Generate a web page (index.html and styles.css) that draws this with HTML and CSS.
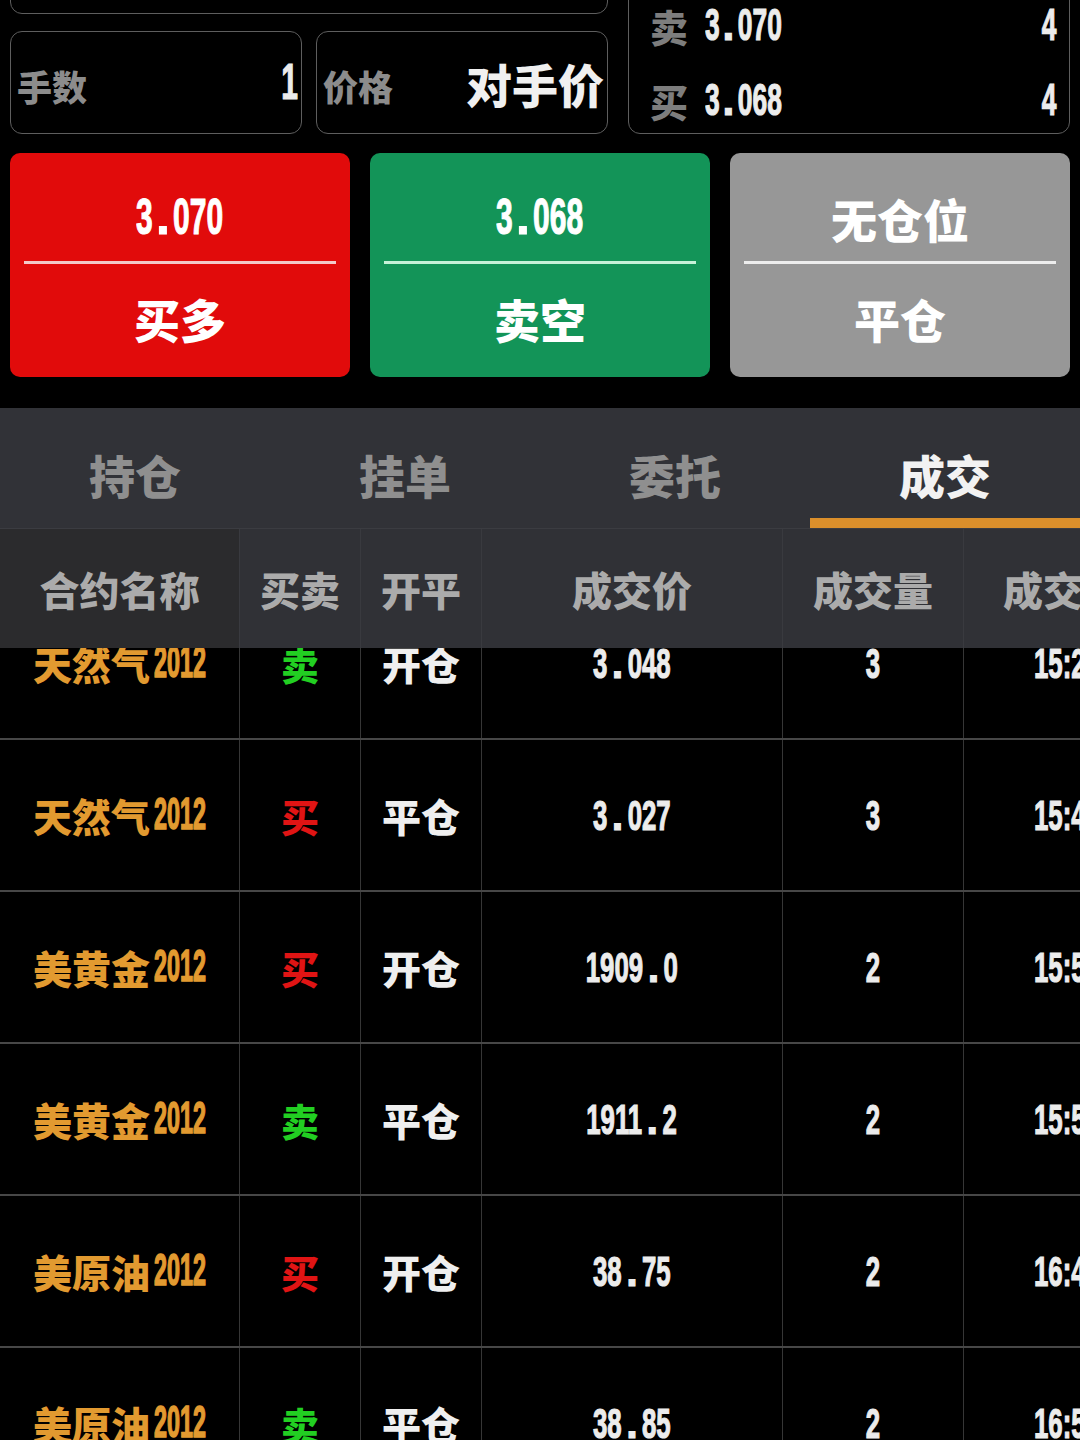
FILE: index.html
```html
<!DOCTYPE html>
<html lang="zh-CN">
<head>
<meta charset="utf-8">
<title>成交</title>
<link rel="stylesheet" href="styles.css">
</head>
<body>
<div class="page">
  <section class="top">
    <div class="left-col">
      <div class="box box-wide"></div>
      <div class="box-row">
        <div class="box field">
          <span class="label">手数</span>
          <span class="n n-field">1</span>
        </div>
        <div class="box field">
          <span class="label">价格</span>
          <span class="value">对手价</span>
        </div>
      </div>
    </div>
    <div class="box quote">
      <div class="quote-row">
        <span class="label">卖</span>
        <span class="n n-quote">3<span class="dot">.</span>070</span>
        <span class="qty"><span class="n n-quote n-right">4</span></span>
      </div>
      <div class="quote-row">
        <span class="label">买</span>
        <span class="n n-quote">3<span class="dot">.</span>068</span>
        <span class="qty"><span class="n n-quote n-right">4</span></span>
      </div>
    </div>
  </section>

  <section class="actions">
    <div class="btn btn-red">
      <div class="btn-top"><span class="n n-btn">3<span class="dot">.</span>070</span></div>
      <div class="btn-line"></div>
      <div class="btn-bottom">买多</div>
    </div>
    <div class="btn btn-green">
      <div class="btn-top"><span class="n n-btn">3<span class="dot">.</span>068</span></div>
      <div class="btn-line"></div>
      <div class="btn-bottom">卖空</div>
    </div>
    <div class="btn btn-gray">
      <div class="btn-top cjk-top">无仓位</div>
      <div class="btn-line"></div>
      <div class="btn-bottom">平仓</div>
    </div>
  </section>

  <nav class="tabs">
    <div class="tab">持仓</div>
    <div class="tab">挂单</div>
    <div class="tab">委托</div>
    <div class="tab active">成交</div>
  </nav>

  <section class="table">
    <div class="thead">
      <div class="th th-first">合约名称</div>
      <div class="th">买卖</div>
      <div class="th">开平</div>
      <div class="th">成交价</div>
      <div class="th">成交量</div>
      <div class="th">成交时间</div>
    </div>
    <div class="tbody">
      <div class="tr">
        <div class="td name">天然气<span class="n n-name">2012</span></div>
        <div class="td sell">卖</div>
        <div class="td op">开仓</div>
        <div class="td"><span class="n n-cell">3<span class="dot">.</span>048</span></div>
        <div class="td"><span class="n n-cell">3</span></div>
        <div class="td"><span class="n n-cell">15:21:36</span></div>
      </div>
      <div class="tr">
        <div class="td name">天然气<span class="n n-name">2012</span></div>
        <div class="td buy">买</div>
        <div class="td op">平仓</div>
        <div class="td"><span class="n n-cell">3<span class="dot">.</span>027</span></div>
        <div class="td"><span class="n n-cell">3</span></div>
        <div class="td"><span class="n n-cell">15:43:08</span></div>
      </div>
      <div class="tr">
        <div class="td name">美黄金<span class="n n-name">2012</span></div>
        <div class="td buy">买</div>
        <div class="td op">开仓</div>
        <div class="td"><span class="n n-cell">1909<span class="dot">.</span>0</span></div>
        <div class="td"><span class="n n-cell">2</span></div>
        <div class="td"><span class="n n-cell">15:50:12</span></div>
      </div>
      <div class="tr">
        <div class="td name">美黄金<span class="n n-name">2012</span></div>
        <div class="td sell">卖</div>
        <div class="td op">平仓</div>
        <div class="td"><span class="n n-cell">1911<span class="dot">.</span>2</span></div>
        <div class="td"><span class="n n-cell">2</span></div>
        <div class="td"><span class="n n-cell">15:57:45</span></div>
      </div>
      <div class="tr">
        <div class="td name">美原油<span class="n n-name">2012</span></div>
        <div class="td buy">买</div>
        <div class="td op">开仓</div>
        <div class="td"><span class="n n-cell">38<span class="dot">.</span>75</span></div>
        <div class="td"><span class="n n-cell">2</span></div>
        <div class="td"><span class="n n-cell">16:42:19</span></div>
      </div>
      <div class="tr">
        <div class="td name">美原油<span class="n n-name">2012</span></div>
        <div class="td sell">卖</div>
        <div class="td op">平仓</div>
        <div class="td"><span class="n n-cell">38<span class="dot">.</span>85</span></div>
        <div class="td"><span class="n n-cell">2</span></div>
        <div class="td"><span class="n n-cell">16:55:03</span></div>
      </div>
    </div>
  </section>
</div>
</body>
</html>
```
FILE: styles.css
```css
* { box-sizing: border-box; }
html, body {
  margin: 0;
  padding: 0;
  background: #000;
}
body {
  width: 1080px;
  height: 1440px;
  overflow: hidden;
  font-family: "Noto Sans CJK SC", "Noto Sans", sans-serif;
  font-weight: 900;
  color: #efefef;
}
.page { width: 1080px; overflow: hidden; }

/* condensed number font */
.n {
  display: inline-block;
  font-family: "Liberation Sans", Arial, sans-serif;
  font-weight: 700;
  transform: scaleX(0.6);
  transform-origin: center;
  white-space: nowrap;
  color: #ececec;
  -webkit-text-stroke: 1.2px currentColor;
}
.n .dot {
  display: inline-block;
  margin: 0 10px;
  transform: scaleX(1.6);
}

/* top section */
.top {
  display: flex;
  gap: 20px;
  padding: 0 10px;
  margin-top: -89px;
}
.left-col {
  width: 598px;
  display: flex;
  flex-direction: column;
  gap: 17px;
}
.box {
  border: 1.5px solid #5e5e5e;
  border-radius: 12px;
}
.box-wide { height: 103px; }
.box-row { display: flex; gap: 14px; }
.field {
  flex: 1;
  height: 103px;
  display: flex;
  align-items: center;
  justify-content: space-between;
  padding: 0 3px 0 6px;
}
.label {
  color: #8c8c8c;
  font-size: 35px;
  line-height: 1;
}
.field .label { margin-top: 6px; }
.n-field {
  font-size: 50px;
  line-height: 1;
  transform-origin: right center;
  margin-top: -2px;
}
.value {
  font-size: 46px;
  line-height: 1;
  color: #f0f0f0;
}
.quote {
  width: 442px;
  height: 223px;
  display: flex;
  flex-direction: column;
  justify-content: flex-end;
  gap: 7px;
  padding: 0 13px 0 21px;
}
.quote-row {
  height: 68px;
  display: flex;
  align-items: center;
}
.quote-row .label { font-size: 38px; width: 55px; color: #7d7d7d; margin-top: 4px; }
.n-quote {
  font-size: 44px;
  line-height: 1;
  transform-origin: left center;
  margin-top: 2px;
}
.n-quote .dot { margin: 0 9px; }
.qty { flex: 1; text-align: right; }
.n-right { transform-origin: right center; }

/* action buttons */
.actions {
  display: flex;
  gap: 20px;
  padding: 0 10px;
  margin-top: 19px;
}
.btn {
  flex: 1;
  height: 224px;
  border-radius: 10px;
  padding: 0 14px;
  display: flex;
  flex-direction: column;
}
.btn-red { background: #e10b0b; }
.btn-green { background: #139458; }
.btn-gray { background: #979797; }
.btn-top {
  height: 108px;
  padding-top: 20px;
  display: flex;
  align-items: center;
  justify-content: center;
}
.n-btn {
  font-size: 50px;
  line-height: 1;
  color: #fff;
}
.n-btn .dot { margin: 0 10px; }
.cjk-top {
  font-size: 46px;
  color: #fff;
  padding-top: 22px;
}
.btn-line { height: 3px; }
.btn-red .btn-line { background: #f3c9c9; }
.btn-green .btn-line { background: #c6f2d8; }
.btn-gray .btn-line { background: #ededed; }
.btn-bottom {
  height: 113px;
  padding-bottom: 6px;
  display: flex;
  align-items: center;
  justify-content: center;
  font-size: 46px;
  color: #fff;
}

/* tabs */
.tabs {
  margin-top: 31px;
  height: 120px;
  background: #313237;
  display: grid;
  grid-template-columns: repeat(4, 270px);
}
.tab {
  height: 120px;
  padding-top: 22px;
  border-bottom: 10px solid transparent;
  display: flex;
  align-items: center;
  justify-content: center;
  font-size: 46px;
  color: #8f8f8f;
}
.tab.active {
  color: #f2f2f2;
  border-bottom-color: #db8f2b;
}

/* table */
.table { width: 1080px; overflow: hidden; }
.thead, .tr {
  display: grid;
  grid-template-columns: 240px 121px 121px 301px 181px 300px;
  width: 1264px;
}
.thead {
  position: relative;
  z-index: 1;
  height: 120px;
  background: #303136;
  border-top: 1px solid #3b3c41;
}
.th {
  display: flex;
  align-items: center;
  justify-content: center;
  font-size: 40px;
  color: #ababab;
  border-right: 1px solid #393a3f;
}
.th-first { background: #2b2b2d; }
.th:last-child { justify-content: flex-start; padding-left: 39px; }
.tbody { margin-top: -60px; }
.tr {
  height: 152px;
  border-bottom: 2px solid #474747;
}
.td {
  display: flex;
  align-items: center;
  justify-content: center;
  border-right: 1px solid #363636;
  font-size: 38px;
}
.td:last-child { justify-content: flex-start; padding-left: 70px; }
.td:last-child .n { transform-origin: left center; }
.name { color: #e29a30; font-size: 39px; }
.n-name {
  color: #e29a30;
  font-size: 45px;
  line-height: 1;
  transform: scaleX(0.52);
  transform-origin: left center;
  margin-left: 4px;
  margin-right: -48px;
  margin-top: -4px;
  -webkit-text-stroke: 1.6px currentColor;
}
.sell { color: #22cf22; }
.buy { color: #e01414; }
.op { color: #efefef; font-size: 39px; }
.n-cell { font-size: 43px; line-height: 1; }
.n-cell .dot { margin: 0 11px; }
```
